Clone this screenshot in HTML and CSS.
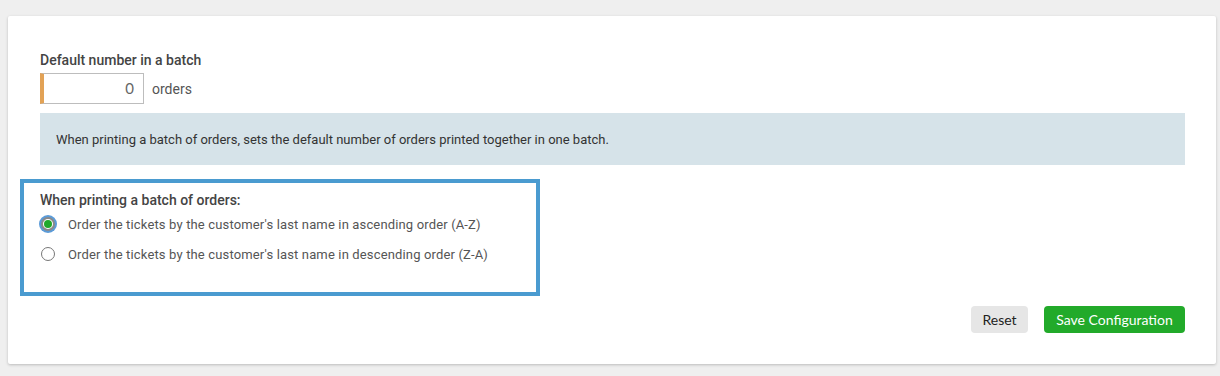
FILE: index.html
```html
<!DOCTYPE html>
<html>
<head>
<meta charset="utf-8">
<link rel="stylesheet" href="styles.css">
</head>
<body>
<div class="card">
  <div class="field">
    <div class="label">Default number in a batch</div>
    <div class="input-row">
      <div class="num-input">0</div>
      <span class="unit">orders</span>
    </div>
    <div class="info">When printing a batch of orders, sets the default number of orders printed together in one batch.</div>
  </div>
  <div class="sort-box">
    <div class="label">When printing a batch of orders:</div>
    <div class="radio-row">
      <span class="radio checked"></span>
      <span class="radio-text">Order the tickets by the customer's last name in ascending order (A-Z)</span>
    </div>
    <div class="radio-row">
      <span class="radio"></span>
      <span class="radio-text">Order the tickets by the customer's last name in descending order (Z-A)</span>
    </div>
  </div>
  <div class="actions">
    <button class="btn btn-reset">Reset</button>
    <button class="btn btn-save">Save Configuration</button>
  </div>
</div>
</body>
</html>
```

FILE: styles.css
```css
html, body {
  margin: 0;
  padding: 0;
  background: #efefef;
}
body {
  padding: 16px 4px 12px 8px;
  font-family: Roboto, "Liberation Sans", sans-serif;
}
.card {
  background: #fff;
  border-radius: 2px;
  box-shadow: 0 1px 3px rgba(0,0,0,0.22);
  padding: 35px 12px 31px 12px;
}
.field {
  padding: 0 19px 0 20px;
}
.label {
  font-size: 14px;
  font-weight: 500;
  color: #444;
  line-height: 18px;
  height: 18px;
}
.input-row {
  display: flex;
  align-items: center;
  margin-top: 4px;
  height: 31px;
}
.num-input {
  box-sizing: border-box;
  width: 104px;
  height: 31px;
  border: 1px solid #bdbdbd;
  border-left: 4px solid #e2a256;
  text-align: right;
  padding-right: 9px;
  font-family: Lato, "Open Sans", sans-serif;
  font-size: 15px;
  line-height: 29px;
  color: #666;
}
.unit {
  margin-left: 8px;
  font-size: 14px;
  color: #555;
}
.info {
  margin-top: 9px;
  height: 52px;
  background: #d6e3e9;
  display: flex;
  align-items: center;
  padding: 0 16px;
  font-size: 13px;
  color: #333;
}
.sort-box {
  margin-top: 14px;
  width: 520px;
  box-sizing: border-box;
  border: 4px solid #4a9bd0;
  padding: 8px 16px 23px 16px;
}
.radio-row {
  display: flex;
  align-items: center;
  height: 30px;
}
.radio {
  box-sizing: border-box;
  width: 14px;
  height: 14px;
  margin-left: 1px;
  border: 1px solid #777;
  border-radius: 50%;
  background: #fff;
  position: relative;
  flex: none;
}
.radio.checked {
  border: 2px solid #8a8a8a;
  box-shadow: 0 0 0 2px #5b9bd8;
}
.radio.checked::after {
  content: "";
  position: absolute;
  left: 1px;
  top: 1px;
  width: 8px;
  height: 8px;
  border-radius: 50%;
  background: #1fa82b;
}
.radio-text {
  margin-left: 13px;
  font-size: 13px;
  color: #555;
  letter-spacing: 0.15px;
}
.actions {
  display: flex;
  justify-content: flex-end;
  gap: 16px;
  margin-top: 10px;
  padding-right: 19px;
}
.btn {
  height: 27px;
  border: none;
  border-radius: 4px;
  font-family: Lato, "Open Sans", sans-serif;
  font-size: 14px;
  padding: 0;
  cursor: pointer;
}
.btn-reset {
  width: 57px;
  background: #e6e6e6;
  color: #222;
}
.btn-save {
  width: 141px;
  background: #22aa2a;
  color: #fff;
}
```
